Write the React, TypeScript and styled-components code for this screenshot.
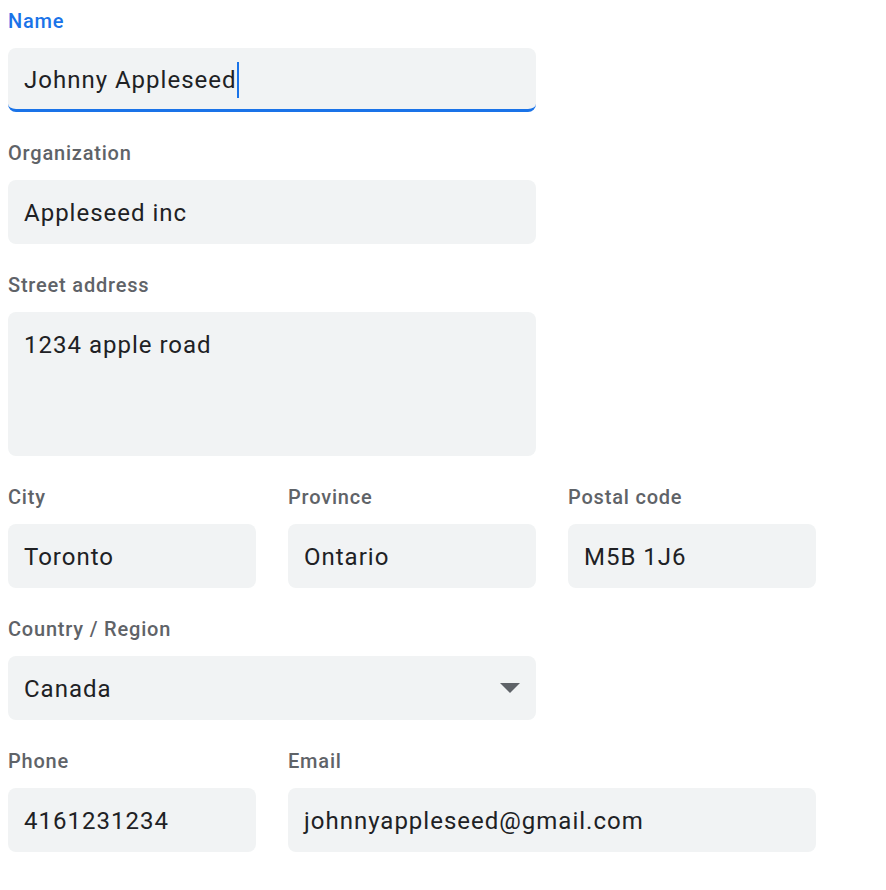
import React from "react";
import styled, { createGlobalStyle } from "styled-components";

const Global = createGlobalStyle`
  html, body { margin: 0; padding: 0; background: #ffffff; }
  body { font-family: Roboto, "Noto Sans", Arial, sans-serif; }
  * { box-sizing: border-box; }
`;

const Form = styled.form`
  display: grid;
  grid-template-columns: repeat(3, 248px);
  column-gap: 32px;
  row-gap: 29px;
  padding: 9px 8px 8px;
`;

const Field = styled.div<{ $span: number }>`
  grid-column: span ${(p) => p.$span};
  display: flex;
  flex-direction: column;
  gap: 15px;
`;

const Label = styled.label<{ $active?: boolean }>`
  font-size: 20px;
  line-height: 24px;
  height: 24px;
  font-weight: 500;
  letter-spacing: 0.8px;
  color: ${(p) => (p.$active ? "#1a73e8" : "#5f6368")};
`;

const Box = styled.div<{ $active?: boolean; $tall?: boolean }>`
  position: relative;
  display: flex;
  align-items: ${(p) => (p.$tall ? "flex-start" : "center")};
  height: ${(p) => (p.$tall ? "144px" : "64px")};
  padding: ${(p) => (p.$tall ? "18px 16px 0" : "2px 16px 0")};
  background: #f1f3f4;
  border-radius: 8px;
  border-bottom: ${(p) => (p.$active ? "3px solid #1a73e8" : "none")};
  font-size: 24px;
  line-height: 30px;
  letter-spacing: 1px;
  color: #202124;
  white-space: nowrap;
`;

const Caret = styled.span`
  display: inline-block;
  width: 2px;
  height: 36px;
  background: #1a73e8;
`;

const Arrow = styled.svg`
  position: absolute;
  right: 16px;
  top: 50%;
  transform: translateY(-50%);
`;

type F = { label: string; value: string; span: number; active?: boolean; tall?: boolean; select?: boolean };

const fields: F[] = [
  { label: "Name", value: "Johnny Appleseed", span: 2, active: true },
  { label: "Organization", value: "Appleseed inc", span: 2 },
  { label: "Street address", value: "1234 apple road", span: 2, tall: true },
  { label: "City", value: "Toronto", span: 1 },
  { label: "Province", value: "Ontario", span: 1 },
  { label: "Postal code", value: "M5B 1J6", span: 1 },
  { label: "Country / Region", value: "Canada", span: 2, select: true },
  { label: "Phone", value: "4161231234", span: 1 },
  { label: "Email", value: "johnnyappleseed@gmail.com", span: 2 },
];

const Spacer = styled.div`
  grid-column: span 1;
`;

export default function App() {
  return (
    <>
      <Global />
      <Form onSubmit={(e) => e.preventDefault()}>
        {fields.map((f) => (
          <React.Fragment key={f.label}>
            <Field $span={f.span}>
              <Label $active={f.active}>{f.label}</Label>
              <Box $active={f.active} $tall={f.tall}>
                {f.value}
                {f.active && <Caret />}
                {f.select && (
                  <Arrow width="20" height="10" viewBox="0 0 20 10">
                    <path d="M0 0 L20 0 L10 10 Z" fill="#5f6368" />
                  </Arrow>
                )}
              </Box>
            </Field>
            {f.span === 2 && f.label !== "Email" && <Spacer />}
          </React.Fragment>
        ))}
      </Form>
    </>
  );
}
